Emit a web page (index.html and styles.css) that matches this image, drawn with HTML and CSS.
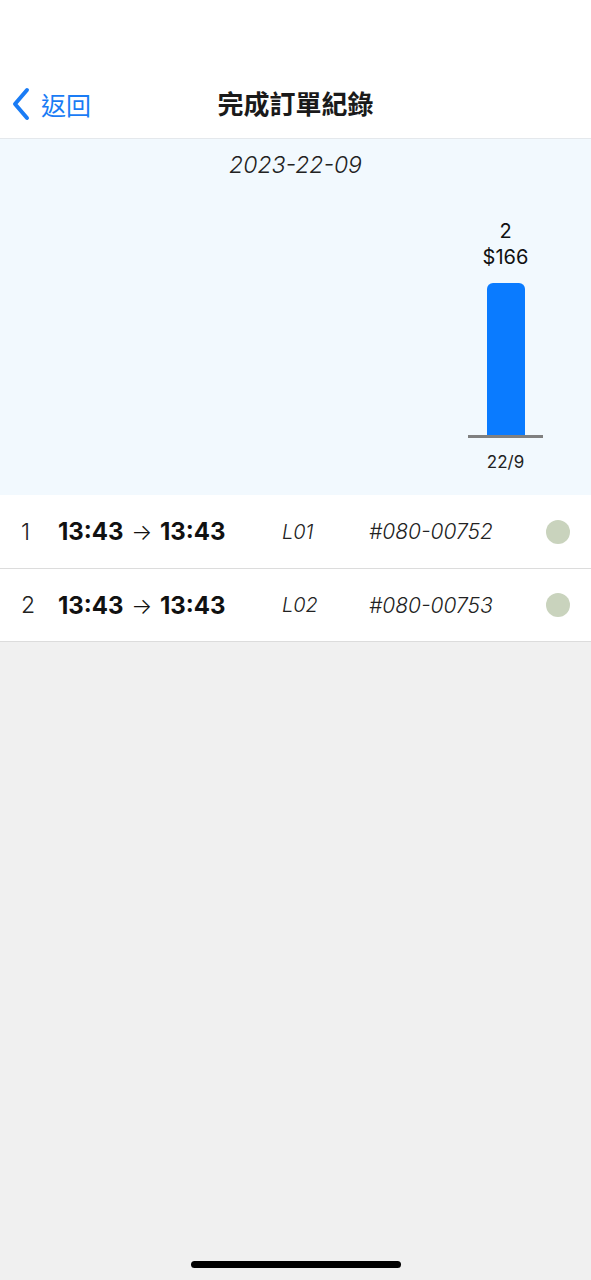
FILE: index.html
```html
<!DOCTYPE html>
<html lang="zh-Hant">
<head>
<meta charset="utf-8">
<title>完成訂單紀錄</title>
<link rel="stylesheet" href="styles.css">
</head>
<body>
<div class="screen">
  <header class="navbar">
    <div class="back">
      <svg class="chev" width="20" height="34" viewBox="0 0 20 34"><path d="M16 3 L4 17 L16 31" fill="none" stroke="#1a7cf5" stroke-width="4" stroke-linecap="round" stroke-linejoin="round"/></svg>
      <span class="back-text">返回</span>
    </div>
    <h1 class="title">完成訂單紀錄</h1>
  </header>
  <section class="chart">
    <div class="date">2023-22-09</div>
    <div class="plot">
      <div class="col">
        <div class="val">2</div>
        <div class="val">$166</div>
        <div class="bar" style="height:153px"></div>
        <div class="axis"></div>
        <div class="xlabel">22/9</div>
      </div>
    </div>
  </section>
  <ul class="list">
    <li class="row">
      <span class="idx">1</span>
      <span class="times">13:43 <span class="arrow">→</span> 13:43</span>
      <span class="code">L01</span>
      <span class="order">#080-00752</span>
      <span class="dot"></span>
    </li>
    <li class="row">
      <span class="idx">2</span>
      <span class="times">13:43 <span class="arrow">→</span> 13:43</span>
      <span class="code">L02</span>
      <span class="order">#080-00753</span>
      <span class="dot"></span>
    </li>
  </ul>
  <div class="home-indicator"></div>
</div>
</body>
</html>
```
FILE: styles.css
```css
* { box-sizing: border-box; }
html, body { margin: 0; padding: 0; }
body {
  font-family: Inter, "Noto Sans CJK TC", sans-serif;
  background: #f0f0f0;
  color: #111;
}
.screen {
  width: 591px;
  height: 1280px;
  display: flex;
  flex-direction: column;
  position: relative;
  background: #f0f0f0;
}
.navbar {
  height: 139px;
  background: #fff;
  border-bottom: 1px solid #e4e8ec;
  position: relative;
  display: flex;
  align-items: flex-end;
  justify-content: center;
  padding-bottom: 17px;
}
.back {
  position: absolute;
  left: 11px;
  bottom: 17px;
  display: flex;
  align-items: center;
  gap: 10px;
}
.chev { display: block; }
.back-text {
  font-family: "Noto Sans CJK TC", sans-serif;
  font-size: 25px;
  color: #1a7cf5;
  line-height: 34px;
}
.title {
  margin: 0;
  font-family: "Noto Sans CJK TC", sans-serif;
  font-size: 26px;
  font-weight: 700;
  line-height: 36px;
  color: #1a1a1a;
}
.chart {
  height: 356px;
  background: #f2f9fe;
  display: flex;
  flex-direction: column;
}
.date {
  text-align: center;
  font-size: 23px;
  font-style: italic;
  font-weight: 300;
  color: #222;
  margin-top: 11px;
  line-height: 30px;
}
.plot {
  display: flex;
  justify-content: flex-end;
  padding-right: 48px;
  margin-top: 38px;
}
.col {
  width: 75px;
  display: flex;
  flex-direction: column;
  align-items: center;
}
.val {
  font-size: 20px;
  line-height: 26px;
  color: #111;
}
.bar {
  width: 38px;
  background: #0a7bff;
  border-radius: 6px 6px 0 0;
  margin-top: 13px;
}
.axis {
  width: 75px;
  height: 3px;
  background: #808080;
  margin-top: -1px;
}
.xlabel {
  font-size: 17px;
  color: #222;
  margin-top: 13px;
  line-height: 22px;
}
.list {
  list-style: none;
  margin: 0;
  padding: 0;
  background: #fff;
}
.row {
  height: 74px;
  display: flex;
  align-items: center;
  border-bottom: 1px solid #dcdcdc;
  padding-left: 21px;
}
.row + .row { height: 73px; }
.idx {
  width: 37px;
  font-size: 23px;
  font-weight: 300;
  color: #222;
}
.times {
  width: 224px;
  font-size: 24px;
  font-weight: 700;
  color: #111;
  white-space: nowrap;
}
.arrow {
  font-weight: 300;
  font-size: 22px;
  margin: 0 2px;
}
.code {
  width: 87px;
  font-size: 20px;
  font-style: italic;
  font-weight: 300;
  color: #222;
}
.order {
  width: 177px;
  font-size: 21px;
  font-style: italic;
  font-weight: 300;
  color: #222;
}
.dot {
  width: 24px;
  height: 24px;
  border-radius: 50%;
  background: #c9d3bd;
}
.home-indicator {
  position: absolute;
  left: 191px;
  bottom: 12px;
  width: 210px;
  height: 7px;
  border-radius: 4px;
  background: #000;
}
```
